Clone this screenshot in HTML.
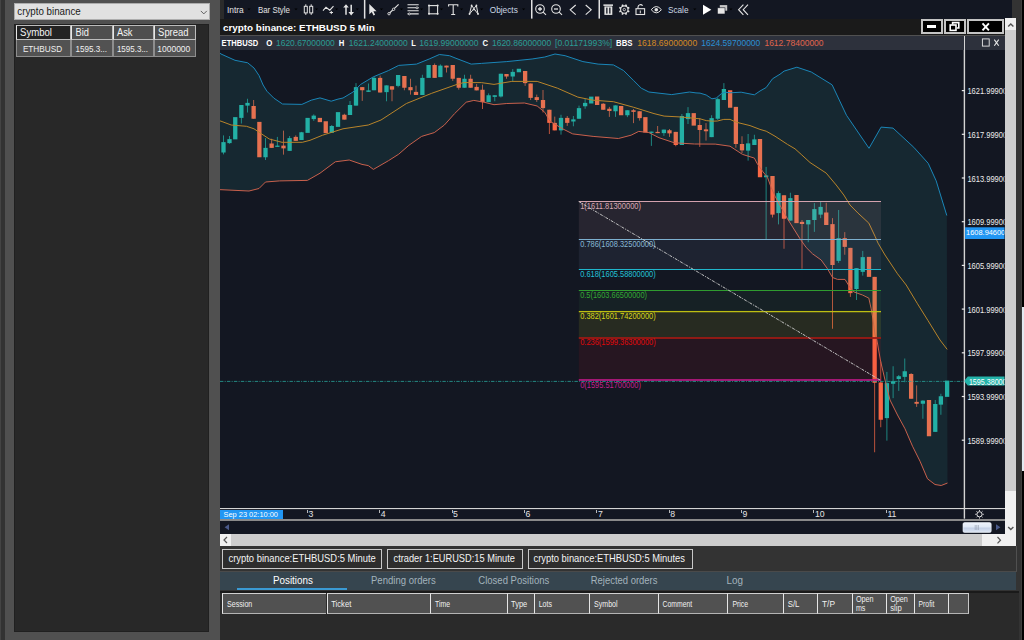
<!DOCTYPE html>
<html><head><meta charset="utf-8"><title>ETHBUSD chart</title>
<style>
*{box-sizing:border-box;margin:0;padding:0}
html,body{width:1024px;height:640px;overflow:hidden;background:#333;font-family:"Liberation Sans",sans-serif;}
.a{position:absolute}
#left{left:0;top:0;width:220px;height:640px;background:#505050}
#lstrip{left:0;top:0;width:4.7px;height:640px;background:#333;border-left:1.2px solid #444}
#combo{left:14px;top:3px;width:196px;height:17px;background:#e1e1e1;border:1px solid #adadad}
#ltab{left:14.2px;top:24px;width:195.3px;height:608px;background:#282828;border:1.6px solid #202020}
.lh{top:25px;height:15px;background:#4f4f4f;border:1px solid #bdbdbd;border-left:1.5px solid #e6e6e6}
.lc{top:39px;height:18px;background:#525252;border:1px solid #8e8e8e}
#tb{left:220px;top:0;width:793px;height:19px;background:#131722}
#tbl{left:220px;top:0;width:4px;height:19px;background:#2b2b2b}
#rstrip{left:1012.4px;top:0;width:11.6px;height:640px;background:#333}
#rstrip2{left:1022.2px;top:0;width:1.8px;height:640px;background:#000}
#rstrip3{left:1021px;top:0;width:1.2px;height:640px;background:#3d3d3d}
#rpanel{left:1022.2px;top:307px;width:1.8px;height:163.5px;background:#e2e9f0}
#title{left:219.5px;top:18.6px;width:785.5px;height:17.4px;background:#1a1a1a;border-bottom:1px solid #505050}
#info{left:220px;top:36px;width:785px;height:14.3px;background:#2d313c;z-index:2}
#chart{left:220px;top:50px;width:785px;height:482px;background:#131722;overflow:hidden}
.wb{top:19px;height:15px;background:#000;border:2px solid #c4c4c4}
#vs{left:1004.5px;top:18px;width:11.8px;height:528px;background:#cdcdcd}
#hs{left:220px;top:534px;width:785px;height:12px;background:#cdcdcd}
#tabs{left:220px;top:546px;width:796.5px;height:25.8px;background:#333;border-right:1px solid #505050;border-bottom:1px solid #4a4a4a}
.tab{top:549px;height:20px;background:#2d2d2d;border:1px solid #c8c8c8}
#sec{left:219.8px;top:571.8px;width:796.7px;height:18.2px;background:#36454f}
#bot{left:219.8px;top:590px;width:799.2px;height:50px;background:#2a2a2a;border-top:1.3px solid #333}
#botl{left:219.8px;top:591.3px;width:799.2px;height:1.4px;background:#1a1a1a}
.th{top:593px;height:20.8px;background:#515151;border-top:1.2px solid #d0d0d0;border-bottom:1px solid #b4b4b4;border-left:1.6px solid #e6e6e6}
svg text{font-family:"Liberation Sans",sans-serif}
</style></head><body>
<div id="left" class="a"></div><div id="lstrip" class="a"></div>
<div id="combo" class="a"><svg class="a" style="left:185.4px;top:6px" width="8" height="6" viewBox="0 0 8 6"><path d="M0.8 0.9 L3.8 3.9 L6.8 0.9" fill="none" stroke="#606060" stroke-width="1"/></svg></div>
<div id="ltab" class="a"></div>
<div class="a lc" style="left:15.5px;width:55.5px;"></div>
<div class="a lh" style="left:15.5px;width:55.5px;background:#232323;"></div>
<div class="a lc" style="left:71px;width:41.5px;"></div>
<div class="a lh" style="left:71px;width:41.5px;"></div>
<div class="a lc" style="left:112.5px;width:41.5px;"></div>
<div class="a lh" style="left:112.5px;width:41.5px;"></div>
<div class="a lc" style="left:154px;width:42px;"></div>
<div class="a lh" style="left:154px;width:42px;"></div>
<div id="tb" class="a"></div><div id="tbl" class="a"></div>
<svg class="a" style="left:0;top:0" width="1024" height="19" viewBox="0 0 1024 19" fill="none" stroke-linecap="butt">
<path d="M247.4 8.5 h3.2 l-1.6 1.8z" fill="#000"/>
<path d="M294.4 8.5 h3.2 l-1.6 1.8z" fill="#000"/>
<path d="M314.9 8.5 h3.2 l-1.6 1.8z" fill="#000"/>
<path d="M335.0 8.5 h3.2 l-1.6 1.8z" fill="#000"/>
<path d="M355.7 8.5 h3.2 l-1.6 1.8z" fill="#000"/>
<path d="M379.9 8.5 h3.2 l-1.6 1.8z" fill="#000"/>
<path d="M399.9 8.5 h3.2 l-1.6 1.8z" fill="#000"/>
<path d="M420.0 8.5 h3.2 l-1.6 1.8z" fill="#000"/>
<path d="M439.9 8.5 h3.2 l-1.6 1.8z" fill="#000"/>
<path d="M460.0 8.5 h3.2 l-1.6 1.8z" fill="#000"/>
<path d="M480.1 8.5 h3.2 l-1.6 1.8z" fill="#000"/>
<path d="M522.0 8.5 h3.2 l-1.6 1.8z" fill="#000"/>
<path d="M693.2 8.5 h3.2 l-1.6 1.8z" fill="#000"/>
<path d="M729.3 8.5 h3.2 l-1.6 1.8z" fill="#000"/>
<rect x="363.9" y="0" width="1.5" height="18.6" fill="#e2e2e2"/>
<rect x="531.0" y="0" width="1.5" height="18.6" fill="#e2e2e2"/>
<rect x="598.5" y="0" width="1.5" height="18.6" fill="#e2e2e2"/>
<g stroke="#e4e4e4" stroke-width="1"><rect x="304.3" y="6.3" width="3" height="6.6"/><path d="M305.8 4.3v2M305.8 12.9v2"/><rect x="309.7" y="6.3" width="3" height="6.6"/><path d="M311.2 4.3v2M311.2 12.9v2"/></g>
<path d="M323 10.6 L326 7.2 L329.8 10.2 L333.5 6.2" stroke="#e4e4e4" stroke-width="1.1"/><path d="M329.6 12.5h3.4M331.3 10.9v3.2" stroke="#e4e4e4" stroke-width="1"/>
<g stroke="#e4e4e4" stroke-width="1.5"><path d="M346 14.8V6M351.2 4.8v8.8"/></g><path d="M346 4.2l-2.8 3.4h5.6zM351.2 15.4l-2.8-3.4h5.6z" fill="#e4e4e4"/>
<path d="M369.3 4v10.2l2.5-2.3 1.7 3.6 1.6-0.8-1.7-3.5h3.2z" fill="#e4e4e4"/>
<path d="M389.6 13 L398.6 4.3" stroke="#e4e4e4" stroke-width="1.1"/><circle cx="389" cy="13.7" r="1.2" stroke="#e4e4e4" stroke-width="0.9" fill="#131722"/><circle cx="393.6" cy="9.3" r="1.2" stroke="#e4e4e4" stroke-width="0.9" fill="#131722"/>
<g stroke="#e4e4e4" stroke-width="1.1"><path d="M407.5 4.8h11.2M407.5 7.8h11.2M407.5 10.8h11.2M407.5 13.9h11.2"/><circle cx="417" cy="7.8" r="1" fill="#131722" stroke-width="0.8"/><circle cx="409.3" cy="13.9" r="1" fill="#131722" stroke-width="0.8"/></g>
<rect x="429" y="5.6" width="8.6" height="8.2" stroke="#e4e4e4" stroke-width="1.1"/><circle cx="429" cy="5.6" r="1" fill="#e4e4e4"/><circle cx="429" cy="13.8" r="1" fill="#e4e4e4"/><circle cx="437.6" cy="5.6" r="1" fill="#e4e4e4"/><circle cx="437.6" cy="13.8" r="1" fill="#e4e4e4"/>
<path d="M448.6 6.4V4.8h9.2v1.6M453.2 4.8v9.6M451.2 14.5h4" stroke="#e4e4e4" stroke-width="1.1"/>
<path d="M469.5 14 L471.6 5.5 L478 14 L476.4 5.5 Z" stroke="#e4e4e4" stroke-width="1"/><circle cx="469.5" cy="14" r="0.9" fill="#e4e4e4"/><circle cx="471.6" cy="5.5" r="0.9" fill="#e4e4e4"/><circle cx="478" cy="14" r="0.9" fill="#e4e4e4"/><circle cx="476.4" cy="5.5" r="0.9" fill="#e4e4e4"/><circle cx="474" cy="9.6" r="0.9" fill="#e4e4e4"/>
<g stroke="#e4e4e4" stroke-width="1.1"><circle cx="540" cy="9" r="4.3"/><path d="M543.2 12.2L546 14.9"/><path d="M538 9h4M540 7v4" stroke-width="1.3"/><circle cx="556" cy="9" r="4.3"/><path d="M559.2 12.2L562 14.9"/><path d="M554 9h4" stroke-width="1.3"/></g>
<path d="M575.7 5 L570.2 9.8 L575.7 14.7M585.7 5 L591.2 9.8 L585.7 14.7" stroke="#e4e4e4" stroke-width="1.1"/>
<rect x="603.4" y="4.4" width="9.6" height="1.5" fill="#e4e4e4"/><rect x="604.4" y="6.4" width="7.9" height="8.5" fill="#e4e4e4"/><rect x="606.2" y="7.6" width="1.3" height="6" fill="#131722"/><rect x="609.2" y="7.6" width="1.3" height="6" fill="#131722"/>
<circle cx="624.3" cy="9.6" r="3.7" stroke="#e4e4e4" stroke-width="1.1"/><path d="M627.72 11.02L629.29 11.67M625.72 13.02L626.37 14.59M622.88 13.02L622.23 14.59M620.88 11.02L619.31 11.67M620.88 8.18L619.31 7.53M622.88 6.18L622.23 4.61M625.72 6.18L626.37 4.61M627.72 8.18L629.29 7.53" stroke="#e4e4e4" stroke-width="1.7"/><circle cx="624.3" cy="9.6" r="1.2" stroke="#e4e4e4" stroke-width="0.8"/>
<rect x="636" y="8.7" width="8.6" height="5.8" stroke="#e4e4e4" stroke-width="1.1"/><path d="M638 8.6V7a2.5 2.5 0 0 1 4.6-1.2" stroke="#e4e4e4" stroke-width="1.1"/><rect x="639.8" y="10.5" width="1" height="2.8" fill="#e4e4e4"/>
<path d="M651.2 9.7 Q656.3 3.4 661.4 9.7 Q656.3 16 651.2 9.7Z" stroke="#e4e4e4" stroke-width="1"/><circle cx="656.3" cy="9.7" r="1.8" fill="#e4e4e4"/>
<path d="M703 4.7V14.8L711.3 9.7Z" fill="#fff"/>
<rect x="719.8" y="5.1" width="7.4" height="5.6" fill="#c8c8c8"/><rect x="717.4" y="7.8" width="7.6" height="6.2" fill="#e6e6e6" stroke="#131722" stroke-width="0.6"/>
<path d="M743.4 4.6 L738.6 9.7 L743.4 14.8M748 4.6 L743.2 9.7 L748 14.8" stroke="#e4e4e4" stroke-width="1.1"/>
</svg>
<div id="rstrip" class="a"></div><div id="rstrip3" class="a"></div><div id="rstrip2" class="a"></div><div id="rpanel" class="a"></div>
<div id="title" class="a"></div>
<div class="a wb" style="left:920.5px;width:22px"><div class="a" style="left:4.2px;top:4.2px;width:9.6px;height:3.2px;background:#fff"></div></div>
<div class="a wb" style="left:944px;width:21.5px"><svg class="a" style="left:0;top:0" width="18" height="12" viewBox="0 0 18 12" fill="none" stroke="#fff" stroke-width="1.6"><path d="M6.6 3.4V1.6h6.2v5.4h-2"/><rect x="4.2" y="4" width="5.8" height="5.4" fill="#000"/></svg></div>
<div class="a wb" style="left:967px;width:37px"><svg class="a" style="left:0;top:0" width="33" height="12" viewBox="0 0 33 12" fill="none" stroke="#fff" stroke-width="1.9"><path d="M13.5 2.3l6.4 7M19.9 2.3l-6.4 7"/></svg></div>
<div id="info" class="a"></div><div class="a" style="left:963.7px;top:35.5px;width:1.4px;height:16px;background:#d4d4d4;z-index:3"></div>
<svg class="a" style="left:980px;top:37px;z-index:4" width="24" height="12" viewBox="0 0 24 12" fill="none" stroke="#e8e8e8"><rect x="2.4" y="1.9" width="6.8" height="7.2" stroke-width="0.9"/><path d="M14.3 2.6l4.4 6.2M18.7 2.6l-4.4 6.2" stroke-width="1.1"/></svg>
<div id="chart" class="a"><svg class="a" style="left:0;top:0" width="785" height="482" viewBox="0 0 785 482" font-family="Liberation Sans, sans-serif">
<rect x="3.00" y="85.38" width="1" height="19.00" fill="#22aea3" opacity="0.72"/>
<rect x="1.35" y="92.12" width="4.3" height="10.38" fill="#22aea3"/>
<rect x="9.00" y="86.00" width="1" height="7.75" fill="#22aea3" opacity="0.72"/>
<rect x="7.35" y="89.12" width="4.3" height="4.00" fill="#22aea3"/>
<rect x="13.10" y="67.12" width="4.3" height="22.25" fill="#22aea3"/>
<rect x="20.88" y="55.00" width="1" height="18.50" fill="#22aea3" opacity="0.72"/>
<rect x="19.23" y="55.00" width="4.3" height="12.88" fill="#22aea3"/>
<rect x="27.00" y="48.75" width="1" height="13.75" fill="#22aea3" opacity="0.72"/>
<rect x="25.35" y="52.88" width="4.3" height="2.75" fill="#22aea3"/>
<rect x="33.12" y="50.00" width="1" height="18.75" fill="#fb6845" opacity="0.72"/>
<rect x="31.48" y="56.00" width="4.3" height="12.75" fill="#fb6845"/>
<rect x="37.23" y="71.88" width="4.3" height="35.38" fill="#fb6845"/>
<rect x="45.00" y="88.12" width="1" height="21.88" fill="#22aea3" opacity="0.72"/>
<rect x="43.35" y="97.88" width="4.3" height="9.38" fill="#22aea3"/>
<rect x="51.12" y="88.75" width="1" height="9.12" fill="#fb6845" opacity="0.72"/>
<rect x="49.48" y="93.50" width="4.3" height="4.38" fill="#fb6845"/>
<rect x="56.88" y="86.88" width="1" height="10.00" fill="#22aea3" opacity="0.72"/>
<rect x="55.23" y="95.62" width="4.3" height="1.25" fill="#22aea3"/>
<rect x="63.00" y="80.62" width="1" height="24.00" fill="#fb6845" opacity="0.72"/>
<rect x="61.35" y="95.62" width="4.3" height="2.75" fill="#fb6845"/>
<rect x="69.12" y="86.00" width="1" height="14.88" fill="#22aea3" opacity="0.72"/>
<rect x="67.47" y="88.12" width="4.3" height="12.75" fill="#22aea3"/>
<rect x="75.25" y="85.38" width="1" height="5.50" fill="#fb6845" opacity="0.72"/>
<rect x="73.60" y="86.88" width="4.3" height="4.00" fill="#fb6845"/>
<rect x="81.00" y="81.88" width="1" height="8.12" fill="#22aea3" opacity="0.72"/>
<rect x="79.35" y="82.25" width="4.3" height="7.75" fill="#22aea3"/>
<rect x="85.47" y="67.88" width="4.3" height="15.00" fill="#22aea3"/>
<rect x="93.25" y="64.38" width="1" height="6.50" fill="#22aea3" opacity="0.72"/>
<rect x="91.60" y="65.62" width="4.3" height="3.50" fill="#22aea3"/>
<rect x="97.72" y="67.88" width="4.3" height="4.25" fill="#fb6845"/>
<rect x="103.60" y="71.25" width="4.3" height="11.88" fill="#fb6845"/>
<rect x="111.25" y="75.00" width="1" height="7.88" fill="#22aea3" opacity="0.72"/>
<rect x="109.60" y="76.00" width="4.3" height="6.88" fill="#22aea3"/>
<rect x="115.85" y="62.12" width="4.3" height="14.75" fill="#22aea3"/>
<rect x="123.88" y="63.75" width="1" height="5.88" fill="#fb6845" opacity="0.72"/>
<rect x="122.22" y="64.75" width="4.3" height="4.88" fill="#fb6845"/>
<rect x="129.50" y="51.00" width="1" height="14.00" fill="#22aea3" opacity="0.72"/>
<rect x="127.85" y="55.00" width="4.3" height="10.00" fill="#22aea3"/>
<rect x="135.50" y="33.12" width="1" height="22.50" fill="#22aea3" opacity="0.72"/>
<rect x="133.85" y="37.12" width="4.3" height="18.50" fill="#22aea3"/>
<rect x="141.75" y="37.12" width="1" height="13.75" fill="#fb6845" opacity="0.72"/>
<rect x="140.10" y="37.12" width="4.3" height="3.12" fill="#fb6845"/>
<rect x="148.00" y="33.50" width="1" height="8.38" fill="#22aea3" opacity="0.72"/>
<rect x="146.35" y="40.38" width="4.3" height="1.50" fill="#22aea3"/>
<rect x="153.50" y="26.88" width="1" height="13.38" fill="#22aea3" opacity="0.72"/>
<rect x="151.85" y="27.88" width="4.3" height="12.38" fill="#22aea3"/>
<rect x="159.62" y="25.62" width="1" height="16.88" fill="#fb6845" opacity="0.72"/>
<rect x="157.97" y="27.88" width="4.3" height="14.62" fill="#fb6845"/>
<rect x="166.00" y="35.38" width="1" height="15.88" fill="#22aea3" opacity="0.72"/>
<rect x="164.35" y="35.38" width="4.3" height="6.75" fill="#22aea3"/>
<rect x="171.50" y="36.25" width="1" height="15.00" fill="#fb6845" opacity="0.72"/>
<rect x="169.85" y="36.25" width="4.3" height="3.38" fill="#fb6845"/>
<rect x="177.62" y="25.00" width="1" height="12.25" fill="#22aea3" opacity="0.72"/>
<rect x="175.97" y="25.00" width="4.3" height="10.88" fill="#22aea3"/>
<rect x="183.88" y="26.00" width="1" height="14.25" fill="#fb6845" opacity="0.72"/>
<rect x="182.22" y="26.00" width="4.3" height="11.75" fill="#fb6845"/>
<rect x="190.00" y="28.75" width="1" height="15.88" fill="#fb6845" opacity="0.72"/>
<rect x="188.35" y="37.12" width="4.3" height="3.12" fill="#fb6845"/>
<rect x="195.50" y="35.62" width="1" height="9.38" fill="#fb6845" opacity="0.72"/>
<rect x="193.85" y="41.88" width="4.3" height="3.12" fill="#fb6845"/>
<rect x="201.88" y="24.75" width="1" height="20.25" fill="#22aea3" opacity="0.72"/>
<rect x="200.22" y="27.88" width="4.3" height="17.12" fill="#22aea3"/>
<rect x="206.47" y="15.00" width="4.3" height="12.88" fill="#22aea3"/>
<rect x="214.12" y="13.50" width="1" height="14.38" fill="#fb6845" opacity="0.72"/>
<rect x="212.47" y="15.00" width="4.3" height="12.88" fill="#fb6845"/>
<rect x="219.88" y="14.38" width="1" height="12.75" fill="#22aea3" opacity="0.72"/>
<rect x="218.22" y="15.62" width="4.3" height="11.50" fill="#22aea3"/>
<rect x="226.00" y="15.62" width="1" height="6.88" fill="#fb6845" opacity="0.72"/>
<rect x="224.35" y="15.62" width="4.3" height="1.88" fill="#fb6845"/>
<rect x="232.25" y="15.00" width="1" height="15.88" fill="#fb6845" opacity="0.72"/>
<rect x="230.60" y="15.00" width="4.3" height="13.75" fill="#fb6845"/>
<rect x="238.25" y="27.88" width="1" height="11.75" fill="#fb6845" opacity="0.72"/>
<rect x="236.60" y="27.88" width="4.3" height="9.88" fill="#fb6845"/>
<rect x="244.00" y="24.75" width="1" height="13.00" fill="#22aea3" opacity="0.72"/>
<rect x="242.35" y="28.75" width="4.3" height="9.00" fill="#22aea3"/>
<rect x="250.12" y="24.75" width="1" height="13.00" fill="#fb6845" opacity="0.72"/>
<rect x="248.47" y="28.75" width="4.3" height="9.00" fill="#fb6845"/>
<rect x="256.12" y="34.00" width="1" height="6.38" fill="#fb6845" opacity="0.72"/>
<rect x="254.47" y="36.88" width="4.3" height="3.50" fill="#fb6845"/>
<rect x="262.00" y="34.62" width="1" height="24.38" fill="#fb6845" opacity="0.72"/>
<rect x="260.35" y="39.75" width="4.3" height="12.38" fill="#fb6845"/>
<rect x="268.12" y="43.38" width="1" height="8.75" fill="#22aea3" opacity="0.72"/>
<rect x="266.48" y="45.25" width="4.3" height="6.88" fill="#22aea3"/>
<rect x="274.25" y="45.25" width="1" height="6.00" fill="#22aea3" opacity="0.72"/>
<rect x="272.60" y="45.25" width="4.3" height="1.62" fill="#22aea3"/>
<rect x="280.38" y="23.75" width="1" height="23.75" fill="#22aea3" opacity="0.72"/>
<rect x="278.73" y="23.75" width="4.3" height="22.75" fill="#22aea3"/>
<rect x="286.00" y="24.00" width="1" height="4.75" fill="#fb6845" opacity="0.72"/>
<rect x="284.35" y="24.00" width="4.3" height="2.50" fill="#fb6845"/>
<rect x="292.25" y="19.12" width="1" height="11.88" fill="#22aea3" opacity="0.72"/>
<rect x="290.60" y="21.88" width="4.3" height="4.62" fill="#22aea3"/>
<rect x="296.73" y="18.75" width="4.3" height="3.50" fill="#22aea3"/>
<rect x="304.62" y="21.00" width="1" height="14.88" fill="#fb6845" opacity="0.72"/>
<rect x="302.98" y="21.00" width="4.3" height="12.12" fill="#fb6845"/>
<rect x="310.12" y="33.50" width="1" height="16.50" fill="#fb6845" opacity="0.72"/>
<rect x="308.48" y="33.50" width="4.3" height="14.38" fill="#fb6845"/>
<rect x="316.25" y="44.62" width="1" height="7.25" fill="#fb6845" opacity="0.72"/>
<rect x="314.60" y="47.12" width="4.3" height="2.88" fill="#fb6845"/>
<rect x="322.50" y="40.00" width="1" height="22.50" fill="#fb6845" opacity="0.72"/>
<rect x="320.85" y="50.00" width="4.3" height="8.12" fill="#fb6845"/>
<rect x="328.88" y="59.75" width="1" height="24.25" fill="#fb6845" opacity="0.72"/>
<rect x="327.23" y="59.75" width="4.3" height="13.12" fill="#fb6845"/>
<rect x="334.25" y="66.62" width="1" height="13.75" fill="#fb6845" opacity="0.72"/>
<rect x="332.60" y="72.88" width="4.3" height="7.50" fill="#fb6845"/>
<rect x="340.50" y="64.75" width="1" height="19.88" fill="#22aea3" opacity="0.72"/>
<rect x="338.85" y="67.88" width="4.3" height="12.50" fill="#22aea3"/>
<rect x="346.75" y="66.00" width="1" height="9.88" fill="#fb6845" opacity="0.72"/>
<rect x="345.10" y="67.88" width="4.3" height="5.00" fill="#fb6845"/>
<rect x="352.88" y="66.00" width="1" height="10.25" fill="#22aea3" opacity="0.72"/>
<rect x="351.23" y="69.38" width="4.3" height="2.12" fill="#22aea3"/>
<rect x="358.50" y="55.62" width="1" height="13.12" fill="#22aea3" opacity="0.72"/>
<rect x="356.85" y="58.12" width="4.3" height="10.62" fill="#22aea3"/>
<rect x="364.62" y="48.50" width="1" height="10.25" fill="#22aea3" opacity="0.72"/>
<rect x="362.98" y="52.88" width="4.3" height="3.38" fill="#22aea3"/>
<rect x="369.10" y="46.62" width="4.3" height="6.88" fill="#22aea3"/>
<rect x="374.98" y="46.50" width="4.3" height="8.50" fill="#fb6845"/>
<rect x="382.75" y="53.12" width="1" height="6.62" fill="#fb6845" opacity="0.72"/>
<rect x="381.10" y="53.75" width="4.3" height="6.00" fill="#fb6845"/>
<rect x="388.88" y="56.88" width="1" height="10.00" fill="#fb6845" opacity="0.72"/>
<rect x="387.23" y="58.75" width="4.3" height="2.25" fill="#fb6845"/>
<rect x="395.00" y="55.38" width="1" height="11.50" fill="#22aea3" opacity="0.72"/>
<rect x="393.35" y="55.38" width="4.3" height="5.88" fill="#22aea3"/>
<rect x="398.98" y="56.00" width="4.3" height="9.25" fill="#fb6845"/>
<rect x="406.88" y="60.25" width="1" height="6.88" fill="#22aea3" opacity="0.72"/>
<rect x="405.23" y="60.25" width="4.3" height="5.00" fill="#22aea3"/>
<rect x="413.00" y="59.00" width="1" height="14.12" fill="#fb6845" opacity="0.72"/>
<rect x="411.35" y="60.25" width="4.3" height="1.62" fill="#fb6845"/>
<rect x="419.12" y="61.25" width="1" height="9.38" fill="#fb6845" opacity="0.72"/>
<rect x="417.48" y="61.25" width="4.3" height="6.88" fill="#fb6845"/>
<rect x="423.23" y="67.12" width="4.3" height="15.38" fill="#fb6845"/>
<rect x="430.88" y="81.62" width="1" height="14.25" fill="#22aea3" opacity="0.72"/>
<rect x="429.23" y="81.62" width="4.3" height="1.25" fill="#22aea3"/>
<rect x="437.12" y="76.00" width="1" height="7.12" fill="#fb6845" opacity="0.72"/>
<rect x="435.48" y="81.88" width="4.3" height="1.25" fill="#fb6845"/>
<rect x="443.38" y="79.62" width="1" height="6.25" fill="#22aea3" opacity="0.72"/>
<rect x="441.73" y="79.62" width="4.3" height="3.50" fill="#22aea3"/>
<rect x="449.00" y="79.00" width="1" height="7.88" fill="#fb6845" opacity="0.72"/>
<rect x="447.35" y="80.25" width="4.3" height="3.12" fill="#fb6845"/>
<rect x="455.25" y="81.88" width="1" height="14.38" fill="#fb6845" opacity="0.72"/>
<rect x="453.60" y="81.88" width="4.3" height="13.12" fill="#fb6845"/>
<rect x="461.38" y="64.00" width="1" height="31.00" fill="#22aea3" opacity="0.72"/>
<rect x="459.73" y="66.00" width="4.3" height="29.00" fill="#22aea3"/>
<rect x="467.50" y="57.12" width="1" height="16.88" fill="#22aea3" opacity="0.72"/>
<rect x="465.85" y="63.12" width="4.3" height="6.00" fill="#22aea3"/>
<rect x="471.60" y="63.12" width="4.3" height="12.50" fill="#fb6845"/>
<rect x="479.25" y="68.12" width="1" height="28.75" fill="#fb6845" opacity="0.72"/>
<rect x="477.60" y="75.00" width="4.3" height="5.00" fill="#fb6845"/>
<rect x="485.50" y="73.12" width="1" height="17.50" fill="#fb6845" opacity="0.72"/>
<rect x="483.85" y="79.38" width="4.3" height="1.88" fill="#fb6845"/>
<rect x="491.12" y="65.25" width="1" height="21.88" fill="#22aea3" opacity="0.72"/>
<rect x="489.48" y="68.12" width="4.3" height="19.00" fill="#22aea3"/>
<rect x="497.25" y="47.88" width="1" height="22.12" fill="#22aea3" opacity="0.72"/>
<rect x="495.60" y="49.12" width="4.3" height="19.62" fill="#22aea3"/>
<rect x="503.38" y="33.12" width="1" height="16.88" fill="#22aea3" opacity="0.72"/>
<rect x="501.73" y="39.00" width="4.3" height="11.00" fill="#22aea3"/>
<rect x="507.98" y="40.25" width="4.3" height="17.50" fill="#fb6845"/>
<rect x="515.38" y="56.88" width="1" height="40.88" fill="#fb6845" opacity="0.72"/>
<rect x="513.73" y="56.88" width="4.3" height="37.12" fill="#fb6845"/>
<rect x="521.50" y="86.25" width="1" height="16.88" fill="#fb6845" opacity="0.72"/>
<rect x="519.85" y="94.00" width="4.3" height="6.38" fill="#fb6845"/>
<rect x="527.62" y="84.00" width="1" height="26.62" fill="#22aea3" opacity="0.72"/>
<rect x="525.98" y="93.38" width="4.3" height="7.25" fill="#22aea3"/>
<rect x="533.88" y="84.75" width="1" height="10.25" fill="#22aea3" opacity="0.72"/>
<rect x="532.23" y="89.38" width="4.3" height="5.62" fill="#22aea3"/>
<rect x="537.85" y="89.00" width="4.3" height="38.25" fill="#fb6845"/>
<rect x="545.62" y="116.88" width="1" height="73.12" fill="#22aea3" opacity="0.72"/>
<rect x="543.98" y="125.38" width="4.3" height="1.88" fill="#22aea3"/>
<rect x="552.00" y="126.00" width="1" height="41.50" fill="#fb6845" opacity="0.72"/>
<rect x="550.35" y="126.00" width="4.3" height="38.62" fill="#fb6845"/>
<rect x="558.00" y="141.25" width="1" height="33.12" fill="#22aea3" opacity="0.72"/>
<rect x="556.35" y="143.12" width="4.3" height="20.00" fill="#22aea3"/>
<rect x="563.50" y="145.25" width="1" height="53.50" fill="#fb6845" opacity="0.72"/>
<rect x="561.85" y="145.25" width="4.3" height="23.50" fill="#fb6845"/>
<rect x="569.88" y="142.75" width="1" height="27.88" fill="#22aea3" opacity="0.72"/>
<rect x="568.23" y="148.12" width="4.3" height="22.50" fill="#22aea3"/>
<rect x="574.35" y="145.00" width="4.3" height="28.12" fill="#fb6845"/>
<rect x="581.50" y="170.00" width="1" height="48.75" fill="#fb6845" opacity="0.72"/>
<rect x="579.85" y="171.88" width="4.3" height="2.12" fill="#fb6845"/>
<rect x="587.75" y="170.00" width="1" height="22.25" fill="#22aea3" opacity="0.72"/>
<rect x="586.10" y="170.00" width="4.3" height="4.38" fill="#22aea3"/>
<rect x="593.88" y="153.12" width="1" height="28.75" fill="#22aea3" opacity="0.72"/>
<rect x="592.23" y="159.12" width="4.3" height="10.88" fill="#22aea3"/>
<rect x="600.12" y="151.25" width="1" height="16.88" fill="#22aea3" opacity="0.72"/>
<rect x="598.48" y="156.88" width="4.3" height="7.75" fill="#22aea3"/>
<rect x="605.75" y="152.75" width="1" height="22.25" fill="#fb6845" opacity="0.72"/>
<rect x="604.10" y="162.50" width="4.3" height="12.50" fill="#fb6845"/>
<rect x="612.00" y="168.12" width="1" height="110.62" fill="#fb6845" opacity="0.72"/>
<rect x="610.35" y="174.12" width="4.3" height="40.88" fill="#fb6845"/>
<rect x="618.12" y="160.00" width="1" height="52.88" fill="#22aea3" opacity="0.72"/>
<rect x="616.48" y="188.12" width="4.3" height="22.75" fill="#22aea3"/>
<rect x="624.25" y="182.12" width="1" height="22.62" fill="#fb6845" opacity="0.72"/>
<rect x="622.60" y="188.12" width="4.3" height="8.75" fill="#fb6845"/>
<rect x="629.88" y="197.88" width="1" height="49.00" fill="#fb6845" opacity="0.72"/>
<rect x="628.23" y="197.88" width="4.3" height="45.25" fill="#fb6845"/>
<rect x="636.00" y="218.12" width="1" height="31.88" fill="#22aea3" opacity="0.72"/>
<rect x="634.35" y="218.12" width="4.3" height="20.88" fill="#22aea3"/>
<rect x="642.25" y="200.88" width="1" height="24.75" fill="#22aea3" opacity="0.72"/>
<rect x="640.60" y="207.12" width="4.3" height="14.75" fill="#22aea3"/>
<rect x="646.85" y="206.88" width="4.3" height="20.00" fill="#fb6845"/>
<rect x="654.12" y="226.88" width="1" height="175.38" fill="#fb6845" opacity="0.72"/>
<rect x="652.48" y="226.88" width="4.3" height="105.88" fill="#fb6845"/>
<rect x="660.25" y="311.25" width="1" height="66.00" fill="#fb6845" opacity="0.72"/>
<rect x="658.60" y="332.50" width="4.3" height="37.25" fill="#fb6845"/>
<rect x="666.38" y="321.88" width="1" height="68.75" fill="#22aea3" opacity="0.72"/>
<rect x="664.73" y="333.12" width="4.3" height="35.00" fill="#22aea3"/>
<rect x="672.62" y="316.25" width="1" height="31.88" fill="#22aea3" opacity="0.72"/>
<rect x="670.98" y="331.25" width="4.3" height="2.50" fill="#22aea3"/>
<rect x="678.25" y="325.00" width="1" height="15.88" fill="#22aea3" opacity="0.72"/>
<rect x="676.60" y="326.25" width="4.3" height="2.75" fill="#22aea3"/>
<rect x="684.25" y="308.50" width="1" height="23.75" fill="#22aea3" opacity="0.72"/>
<rect x="682.60" y="321.25" width="4.3" height="5.62" fill="#22aea3"/>
<rect x="690.62" y="323.12" width="1" height="25.62" fill="#fb6845" opacity="0.72"/>
<rect x="688.98" y="324.00" width="4.3" height="24.75" fill="#fb6845"/>
<rect x="696.12" y="335.38" width="1" height="21.50" fill="#fb6845" opacity="0.72"/>
<rect x="694.48" y="351.88" width="4.3" height="1.88" fill="#fb6845"/>
<rect x="702.38" y="350.25" width="1" height="18.50" fill="#22aea3" opacity="0.72"/>
<rect x="700.73" y="350.62" width="4.3" height="3.12" fill="#22aea3"/>
<rect x="706.85" y="350.00" width="4.3" height="36.25" fill="#fb6845"/>
<rect x="714.75" y="350.00" width="1" height="31.88" fill="#22aea3" opacity="0.72"/>
<rect x="713.10" y="354.00" width="4.3" height="27.88" fill="#22aea3"/>
<rect x="720.38" y="343.75" width="1" height="21.00" fill="#22aea3" opacity="0.72"/>
<rect x="718.73" y="346.25" width="4.3" height="8.38" fill="#22aea3"/>
<rect x="724.98" y="330.62" width="4.3" height="16.25" fill="#22aea3"/>
<polygon points="-0.5,2.8 1.0,4.0 15.0,10.3 27.7,12.8 34.0,18.0 39.0,25.5 43.1,35.0 46.9,41.2 53.8,48.1 62.5,54.0 81.9,54.4 91.2,50.2 100.0,47.9 111.2,51.2 118.0,49.1 123.0,48.0 133.0,42.0 140.7,34.4 153.4,26.8 168.6,20.5 178.7,15.4 196.5,14.1 209.2,9.0 219.4,4.5 229.5,5.7 236.0,8.3 251.2,14.1 261.4,13.4 286.8,11.6 312.1,9.0 324.8,7.0 335.0,4.0 345.1,5.7 362.9,11.6 378.1,14.1 393.4,14.9 403.5,20.5 413.7,30.6 421.3,38.2 428.9,42.0 451.7,44.6 469.5,42.0 476.0,42.9 480.0,43.1 486.2,45.0 491.9,48.8 496.2,48.1 501.2,43.8 505.0,42.2 510.0,42.8 521.2,42.2 534.4,44.8 540.0,41.0 546.2,37.5 552.5,28.8 560.0,24.2 564.1,21.1 576.9,17.2 591.3,22.0 612.1,34.8 626.5,65.3 649.0,98.3 661.1,77.1 673.0,78.1 693.8,97.3 708.2,113.3 716.2,130.9 726.8,165.5 727.5,433.0 721.2,435.5 715.0,434.5 707.5,428.8 700.0,411.2 692.5,396.2 685.0,378.8 677.5,365.0 670.0,350.0 666.2,335.0 660.6,311.2 656.9,290.0 655.0,285.0 653.1,270.0 651.2,258.8 648.8,248.1 642.5,245.0 633.8,241.9 630.0,237.5 625.0,229.4 617.5,229.4 612.5,227.5 607.5,218.8 601.2,210.0 592.5,203.8 586.2,197.5 580.0,188.8 567.5,168.8 561.2,157.5 555.0,146.2 551.2,137.5 547.5,127.5 542.5,121.2 536.9,113.1 534.4,108.1 522.5,104.4 510.0,96.2 495.2,94.1 474.6,94.0 454.3,92.8 439.0,87.7 428.9,82.6 418.7,81.4 411.1,85.2 398.4,88.5 373.1,86.4 352.7,83.9 342.6,78.8 329.9,71.2 324.8,62.3 317.2,56.0 304.5,53.0 286.8,53.5 274.0,54.7 263.9,52.2 253.8,50.4 246.2,52.2 234.6,63.6 224.4,75.0 214.3,82.6 201.6,86.4 188.9,95.3 178.7,104.2 168.6,110.6 153.4,119.4 148.3,115.6 142.0,114.4 129.2,110.0 115.3,111.8 100.0,123.2 87.4,130.4 59.5,130.9 45.5,132.0 39.0,138.5 29.0,141.0 1.0,139.7 -0.5,139.7" fill="rgba(46,200,190,0.1)"/>
<polyline points="-0.5,2.8 1.0,4.0 15.0,10.3 27.7,12.8 34.0,18.0 39.0,25.5 43.1,35.0 46.9,41.2 53.8,48.1 62.5,54.0 81.9,54.4 91.2,50.2 100.0,47.9 111.2,51.2 118.0,49.1 123.0,48.0 133.0,42.0 140.7,34.4 153.4,26.8 168.6,20.5 178.7,15.4 196.5,14.1 209.2,9.0 219.4,4.5 229.5,5.7 236.0,8.3 251.2,14.1 261.4,13.4 286.8,11.6 312.1,9.0 324.8,7.0 335.0,4.0 345.1,5.7 362.9,11.6 378.1,14.1 393.4,14.9 403.5,20.5 413.7,30.6 421.3,38.2 428.9,42.0 451.7,44.6 469.5,42.0 476.0,42.9 480.0,43.1 486.2,45.0 491.9,48.8 496.2,48.1 501.2,43.8 505.0,42.2 510.0,42.8 521.2,42.2 534.4,44.8 540.0,41.0 546.2,37.5 552.5,28.8 560.0,24.2 564.1,21.1 576.9,17.2 591.3,22.0 612.1,34.8 626.5,65.3 649.0,98.3 661.1,77.1 673.0,78.1 693.8,97.3 708.2,113.3 716.2,130.9 726.8,165.5" fill="none" stroke="#1a86b8" stroke-width="1"/>
<polyline points="-0.5,70.8 1.0,71.2 11.2,75.0 26.5,76.3 34.0,78.8 41.7,84.0 49.3,89.0 62.0,92.3 82.3,92.3 90.0,90.3 102.6,85.2 123.0,78.8 148.3,75.0 161.0,70.0 186.4,53.5 211.7,43.3 237.0,34.4 243.6,32.6 261.4,32.6 274.0,34.4 291.8,31.4 317.2,31.4 337.5,38.2 357.8,47.1 373.1,50.2 393.4,51.7 413.7,57.3 434.0,63.6 444.1,66.1 459.4,66.9 480.0,68.8 486.2,70.6 492.5,71.2 497.5,71.0 503.8,69.4 510.0,69.4 516.2,72.2 530.0,75.6 540.0,79.4 546.2,81.2 555.0,86.2 567.5,94.4 575.0,98.8 581.2,104.4 590.0,112.5 606.2,123.1 616.2,135.0 623.8,145.0 630.0,155.0 638.0,163.1 648.8,173.1 655.0,186.2 658.0,193.1 665.0,205.0 677.5,223.8 686.2,235.0 697.5,253.8 708.0,270.6 713.8,280.0 720.0,290.0 727.2,299.4" fill="none" stroke="#b8842a" stroke-width="1"/>
<polyline points="-0.5,139.7 1.0,139.7 29.0,141.0 39.0,138.5 45.5,132.0 59.5,130.9 87.4,130.4 100.0,123.2 115.3,111.8 129.2,110.0 142.0,114.4 148.3,115.6 153.4,119.4 168.6,110.6 178.7,104.2 188.9,95.3 201.6,86.4 214.3,82.6 224.4,75.0 234.6,63.6 246.2,52.2 253.8,50.4 263.9,52.2 274.0,54.7 286.8,53.5 304.5,53.0 317.2,56.0 324.8,62.3 329.9,71.2 342.6,78.8 352.7,83.9 373.1,86.4 398.4,88.5 411.1,85.2 418.7,81.4 428.9,82.6 439.0,87.7 454.3,92.8 474.6,94.0 495.2,94.1 510.0,96.2 522.5,104.4 534.4,108.1 536.9,113.1 542.5,121.2 547.5,127.5 551.2,137.5 555.0,146.2 561.2,157.5 567.5,168.8 580.0,188.8 586.2,197.5 592.5,203.8 601.2,210.0 607.5,218.8 612.5,227.5 617.5,229.4 625.0,229.4 630.0,237.5 633.8,241.9 642.5,245.0 648.8,248.1 651.2,258.8 653.1,270.0 655.0,285.0 656.9,290.0 660.6,311.2 666.2,335.0 670.0,350.0 677.5,365.0 685.0,378.8 692.5,396.2 700.0,411.2 707.5,428.8 715.0,434.5 721.2,435.5 727.5,433.0" fill="none" stroke="#c9604c" stroke-width="1"/>
<rect x="358.8" y="151.5" width="302.2" height="38.0" fill="rgba(216,160,170,0.105)"/>
<rect x="358.8" y="189.5" width="302.2" height="30.0" fill="rgba(125,150,190,0.10)"/>
<rect x="358.8" y="219.5" width="302.2" height="21.0" fill="rgba(0,188,212,0.0)"/>
<rect x="358.8" y="240.5" width="302.2" height="21.1" fill="rgba(76,175,80,0.07)"/>
<rect x="358.8" y="261.6" width="302.2" height="26.4" fill="rgba(215,215,30,0.105)"/>
<rect x="358.8" y="288.0" width="302.2" height="42.0" fill="rgba(220,20,30,0.095)"/>
<rect x="358.8" y="151.00" width="302.2" height="1.0" fill="#d4a2ae"/>
<text x="360.2" y="158.5" font-size="8.2" fill="#d8aab4" textLength="60.8" lengthAdjust="spacingAndGlyphs">1(1611.81300000)</text>
<rect x="358.8" y="189.00" width="302.2" height="1.0" fill="#7db0cf"/>
<text x="360.2" y="196.5" font-size="8.2" fill="#86b8d6" textLength="75.4" lengthAdjust="spacingAndGlyphs">0.786(1608.32500000)</text>
<rect x="358.8" y="219.00" width="302.2" height="1.0" fill="#20b6cb"/>
<text x="360.2" y="226.5" font-size="8.2" fill="#22c2d8" textLength="75.5" lengthAdjust="spacingAndGlyphs">0.618(1605.58800000)</text>
<rect x="358.8" y="240.00" width="302.2" height="1.0" fill="#2f9c2f"/>
<text x="360.2" y="247.5" font-size="8.2" fill="#34a834" textLength="66.8" lengthAdjust="spacingAndGlyphs">0.5(1603.66500000)</text>
<rect x="358.8" y="260.95" width="302.2" height="1.3" fill="#bebe12"/>
<text x="360.2" y="268.5" font-size="8.2" fill="#d6d618" textLength="75.5" lengthAdjust="spacingAndGlyphs">0.382(1601.74200000)</text>
<rect x="358.8" y="287.10" width="302.2" height="1.8" fill="#9c1a14"/>
<text x="360.2" y="294.5" font-size="8.2" fill="#e00808" textLength="75.5" lengthAdjust="spacingAndGlyphs">0.236(1599.36300000)</text>
<rect x="358.8" y="329.10" width="302.2" height="1.8" fill="#b4187e"/>
<text x="360.2" y="337.5" font-size="8.2" fill="#c4208e" textLength="60.8" lengthAdjust="spacingAndGlyphs">0(1595.51700000)</text>
<line x1="358.8" y1="151.5" x2="660.0" y2="330" stroke="#c8c8c8" stroke-width="0.95" stroke-dasharray="3 1.1 1 1.1"/>
<line x1="0" y1="331.4" x2="744.4" y2="331.4" stroke="#28a49a" stroke-width="0.8" stroke-dasharray="3.4 1.3 1 1.25"/>
<rect x="743.7" y="-16" width="1.4" height="484.70000000000005" fill="#d4d4d4"/>
<rect x="0" y="458" width="785" height="1.1" fill="#d4d4d4"/>
<rect x="741.8" y="40.0" width="3" height="1.2" fill="#e8e8e8"/>
<rect x="741.8" y="83.7" width="3" height="1.2" fill="#e8e8e8"/>
<rect x="741.8" y="127.4" width="3" height="1.2" fill="#e8e8e8"/>
<rect x="741.8" y="171.1" width="3" height="1.2" fill="#e8e8e8"/>
<rect x="741.8" y="214.8" width="3" height="1.2" fill="#e8e8e8"/>
<rect x="741.8" y="258.5" width="3" height="1.2" fill="#e8e8e8"/>
<rect x="741.8" y="302.2" width="3" height="1.2" fill="#e8e8e8"/>
<rect x="741.8" y="345.9" width="3" height="1.2" fill="#e8e8e8"/>
<rect x="741.8" y="389.6" width="3" height="1.2" fill="#e8e8e8"/>
<clipPath id="pc"><rect x="744.4" y="0" width="40.1" height="470"/></clipPath><g clip-path="url(#pc)">
<text x="747.4" y="44.1" font-size="8.4" fill="#ececec" textLength="52.3" lengthAdjust="spacingAndGlyphs">1621.99900000</text>
<text x="747.4" y="87.8" font-size="8.4" fill="#ececec" textLength="52.3" lengthAdjust="spacingAndGlyphs">1617.99900000</text>
<text x="747.4" y="131.5" font-size="8.4" fill="#ececec" textLength="52.3" lengthAdjust="spacingAndGlyphs">1613.99900000</text>
<text x="747.4" y="175.2" font-size="8.4" fill="#ececec" textLength="52.3" lengthAdjust="spacingAndGlyphs">1609.99900000</text>
<text x="747.4" y="218.9" font-size="8.4" fill="#ececec" textLength="52.3" lengthAdjust="spacingAndGlyphs">1605.99900000</text>
<text x="747.4" y="262.6" font-size="8.4" fill="#ececec" textLength="52.3" lengthAdjust="spacingAndGlyphs">1601.99900000</text>
<text x="747.4" y="306.3" font-size="8.4" fill="#ececec" textLength="52.3" lengthAdjust="spacingAndGlyphs">1597.99900000</text>
<text x="747.4" y="350.0" font-size="8.4" fill="#ececec" textLength="52.3" lengthAdjust="spacingAndGlyphs">1593.99900000</text>
<text x="747.4" y="393.7" font-size="8.4" fill="#ececec" textLength="52.3" lengthAdjust="spacingAndGlyphs">1589.99900000</text>
<rect x="745.1" y="177.3" width="45" height="11.7" fill="#2196f3"/>
<text x="746.1" y="184.8" font-size="8" fill="#fff" textLength="51.5" lengthAdjust="spacingAndGlyphs">1608.94600000</text>
<path d="M744 331.0 L747.8 326.5 H800 V335.6 H747.8 Z" fill="#24b3a9"/>
<text x="748.9" y="334.6" font-size="8.2" fill="#fff" textLength="49.5" lengthAdjust="spacingAndGlyphs">1595.38000000</text>
</g>
</svg></div>
<div class="a" style="left:220px;top:509.5px;width:63px;height:9px;background:#2196f3"></div>
<div class="a" style="left:306.8px;top:510px;width:1px;height:2.6px;background:#b8b8b8"></div>
<div class="a" style="left:379.2px;top:510px;width:1px;height:2.6px;background:#b8b8b8"></div>
<div class="a" style="left:451.5px;top:510px;width:1px;height:2.6px;background:#b8b8b8"></div>
<div class="a" style="left:523.9px;top:510px;width:1px;height:2.6px;background:#b8b8b8"></div>
<div class="a" style="left:596.3px;top:510px;width:1px;height:2.6px;background:#b8b8b8"></div>
<div class="a" style="left:668.7px;top:510px;width:1px;height:2.6px;background:#b8b8b8"></div>
<div class="a" style="left:741.0px;top:510px;width:1px;height:2.6px;background:#b8b8b8"></div>
<div class="a" style="left:813.4px;top:510px;width:1px;height:2.6px;background:#b8b8b8"></div>
<div class="a" style="left:885.8px;top:510px;width:1px;height:2.6px;background:#b8b8b8"></div>
<div class="a" style="left:220px;top:518.7px;width:785px;height:2px;background:#8a8a8a"></div>
<div class="a" style="left:220px;top:520.7px;width:785px;height:13px;background:#131722"></div>
<svg class="a" style="left:220px;top:520px;width:785px;height:14px" viewBox="0 0 785 14"><defs><linearGradient id="g" x1="0" y1="0" x2="0" y2="1"><stop offset="0" stop-color="#eef3fb"/><stop offset="0.45" stop-color="#dfe8f5"/><stop offset="0.55" stop-color="#c3d0e6"/><stop offset="1" stop-color="#dde6f4"/></linearGradient></defs><path d="M9 4.2v6l-4.4-3z" fill="#4a5a8a"/><path d="M776 4.2v6l4.4-3z" fill="#4a5a8a"/><rect x="743" y="2.6" width="28.2" height="9.8" rx="1.5" fill="url(#g)" stroke="#f4f8ff" stroke-width="0.6"/><path d="M755.2 5v5M756.8 5v5M758.4 5v5" stroke="#9aa4b4" stroke-width="0.7"/></svg>
<svg class="a" style="left:974px;top:508.5px" width="11" height="11" viewBox="0 0 11 11" fill="none" stroke="#e8e8e8"><circle cx="5.5" cy="5.3" r="2.6" stroke-width="1"/><path d="M5.5 1v1.2M5.5 8.4v1.2M1.2 5.3h1.2M8.6 5.3h1.2M2.5 2.3l.8.8M7.7 7.5l.8.8M8.5 2.3l-.8.8M3.3 7.5l-.8.8" stroke-width="0.9"/></svg>
<div id="hs" class="a"></div>
<div class="a" style="left:220px;top:533.5px;width:11px;height:12.5px;background:#f0f0f0"></div>
<div class="a" style="left:982px;top:533.5px;width:23px;height:12.5px;background:#f0f0f0"></div>
<div id="vs" class="a"></div>
<div class="a" style="left:1004.5px;top:18px;width:11.8px;height:12px;background:#f0f0f0"></div>
<div class="a" style="left:1004.5px;top:490.5px;width:11.8px;height:55.5px;background:#f0f0f0"></div>
<svg class="a" style="left:0;top:0" width="1024" height="640" viewBox="0 0 1024 640" fill="none" stroke="#555" stroke-width="1.2"><path d="M227 537l-3 3 3 3"/><path d="M997.5 537l3 3.2-3 3.2"/><path d="M1008.2 26.6l2.6-2.7 2.6 2.7" stroke-width="1.4"/><path d="M1008.2 526.9l2.6 2.7 2.6-2.7" stroke-width="1.4"/></svg>
<div id="tabs" class="a"></div>
<div class="a tab" style="left:222px;width:160px"></div>
<div class="a tab" style="left:387px;width:136.3px"></div>
<div class="a tab" style="left:527.6px;width:165.2px"></div>
<div id="sec" class="a"><div class="a" style="left:17.5px;top:16px;width:110.1px;height:2.2px;background:#3a9ad4"></div></div>
<div id="bot" class="a"></div><div id="botl" class="a"></div>
<div class="a th" style="left:221.9px;width:104.6px"></div>
<div class="a th" style="left:326.5px;width:103.7px"></div>
<div class="a th" style="left:430.2px;width:76.9px"></div>
<div class="a th" style="left:507.1px;width:26.9px"></div>
<div class="a th" style="left:534px;width:55.2px"></div>
<div class="a th" style="left:589.2px;width:69.1px"></div>
<div class="a th" style="left:658.3px;width:69.0px"></div>
<div class="a th" style="left:727.3px;width:55.6px"></div>
<div class="a th" style="left:782.9px;width:34.3px"></div>
<div class="a th" style="left:817.2px;width:34.4px"></div>
<div class="a th" style="left:851.6px;width:34.7px"></div>
<div class="a th" style="left:886.3px;width:27.6px"></div>
<div class="a th" style="left:913.9px;width:34.3px"></div>
<div class="a th" style="left:948.2px;width:21.1px;border-right:1.2px solid #c8c8c8"></div>
<svg class="a" style="left:0;top:0;pointer-events:none;z-index:9" width="1024" height="640" viewBox="0 0 1024 640"><text x="17.3" y="14.8" font-size="10.5" fill="#1a1a1a" textLength="63.4" lengthAdjust="spacingAndGlyphs">crypto binance</text>
<text x="20.0" y="35.6" font-size="10" fill="#f4f4f4" textLength="32.0" lengthAdjust="spacingAndGlyphs">Symbol</text>
<text x="75.6" y="35.6" font-size="10" fill="#f4f4f4" textLength="13.4" lengthAdjust="spacingAndGlyphs">Bid</text>
<text x="116.9" y="35.6" font-size="10" fill="#f4f4f4" textLength="15.6" lengthAdjust="spacingAndGlyphs">Ask</text>
<text x="158.1" y="35.6" font-size="10" fill="#f4f4f4" textLength="30.4" lengthAdjust="spacingAndGlyphs">Spread</text>
<text x="22.9" y="52.2" font-size="8.7" fill="#f0f0f0" textLength="39.2" lengthAdjust="spacingAndGlyphs">ETHBUSD</text>
<text x="75.4" y="52.2" font-size="8.7" fill="#f0f0f0" textLength="31.5" lengthAdjust="spacingAndGlyphs">1595.3...</text>
<text x="116.9" y="52.2" font-size="8.7" fill="#f0f0f0" textLength="31.2" lengthAdjust="spacingAndGlyphs">1595.3...</text>
<text x="157.3" y="52.2" font-size="8.7" fill="#f0f0f0" textLength="33.0" lengthAdjust="spacingAndGlyphs">1000000</text>
<text x="226.9" y="13.1" font-size="8.8" fill="#e2e2e2" textLength="16.8" lengthAdjust="spacingAndGlyphs">Intra</text>
<text x="257.9" y="13.1" font-size="8.8" fill="#e2e2e2" textLength="32.1" lengthAdjust="spacingAndGlyphs">Bar Style</text>
<text x="489.7" y="13.0" font-size="8.7" fill="#ccd8e4" textLength="28.1" lengthAdjust="spacingAndGlyphs">Objects</text>
<text x="667.9" y="13.0" font-size="8.7" fill="#ccd8e4" textLength="20.6" lengthAdjust="spacingAndGlyphs">Scale</text>
<text x="223.0" y="31.4" font-size="9.7" fill="#fff" font-weight="bold" textLength="151.7" lengthAdjust="spacingAndGlyphs">crypto binance: ETHBUSD 5 Min</text>
<text x="221.6" y="45.6" font-size="8.9" fill="#fff" font-weight="bold" textLength="36.6" lengthAdjust="spacingAndGlyphs">ETHBUSD</text>
<text x="266.3" y="45.6" font-size="8.9" fill="#fff" font-weight="bold" textLength="6.1" lengthAdjust="spacingAndGlyphs">O</text>
<text x="276.0" y="45.6" font-size="9.4" fill="#2a9d94" textLength="58.8" lengthAdjust="spacingAndGlyphs">1620.67000000</text>
<text x="338.8" y="45.6" font-size="8.9" fill="#fff" font-weight="bold" textLength="5.6" lengthAdjust="spacingAndGlyphs">H</text>
<text x="348.8" y="45.6" font-size="9.4" fill="#2a9d94" textLength="58.8" lengthAdjust="spacingAndGlyphs">1621.24000000</text>
<text x="411.3" y="45.6" font-size="8.9" fill="#fff" font-weight="bold" textLength="4.6" lengthAdjust="spacingAndGlyphs">L</text>
<text x="419.2" y="45.6" font-size="9.4" fill="#2a9d94" textLength="59.3" lengthAdjust="spacingAndGlyphs">1619.99000000</text>
<text x="482.5" y="45.6" font-size="8.9" fill="#fff" font-weight="bold" textLength="5.6" lengthAdjust="spacingAndGlyphs">C</text>
<text x="491.9" y="45.6" font-size="9.4" fill="#2a9d94" textLength="59.3" lengthAdjust="spacingAndGlyphs">1620.86000000</text>
<text x="555.0" y="45.6" font-size="9.4" fill="#2a9d94" textLength="57.2" lengthAdjust="spacingAndGlyphs">[0.01171993%]</text>
<text x="616.0" y="45.6" font-size="8.9" fill="#fff" font-weight="bold" textLength="16.5" lengthAdjust="spacingAndGlyphs">BBS</text>
<text x="637.2" y="45.6" font-size="9.4" fill="#d48a24" textLength="60.0" lengthAdjust="spacingAndGlyphs">1618.69000000</text>
<text x="701.3" y="45.6" font-size="9.4" fill="#2a8fd4" textLength="59.0" lengthAdjust="spacingAndGlyphs">1624.59700000</text>
<text x="764.4" y="45.6" font-size="9.4" fill="#e0644c" textLength="59.2" lengthAdjust="spacingAndGlyphs">1612.78400000</text>
<text x="223.5" y="516.9" font-size="8" fill="#fff" textLength="54.5" lengthAdjust="spacingAndGlyphs">Sep 23 02:10:00</text>
<text x="308.4" y="516.9" font-size="8.7" fill="#e4e4e4">3</text>
<text x="380.8" y="516.9" font-size="8.7" fill="#e4e4e4">4</text>
<text x="453.1" y="516.9" font-size="8.7" fill="#e4e4e4">5</text>
<text x="525.5" y="516.9" font-size="8.7" fill="#e4e4e4">6</text>
<text x="597.9" y="516.9" font-size="8.7" fill="#e4e4e4">7</text>
<text x="670.3" y="516.9" font-size="8.7" fill="#e4e4e4">8</text>
<text x="742.6" y="516.9" font-size="8.7" fill="#e4e4e4">9</text>
<text x="815.0" y="516.9" font-size="8.7" fill="#e4e4e4">10</text>
<text x="887.4" y="516.9" font-size="8.7" fill="#e4e4e4">11</text>
<text x="228.5" y="561.9" font-size="10.5" fill="#f4f4f4" textLength="147.3" lengthAdjust="spacingAndGlyphs">crypto binance:ETHBUSD:5 Minute</text>
<text x="393.5" y="561.9" font-size="10.5" fill="#f4f4f4" textLength="121.5" lengthAdjust="spacingAndGlyphs">ctrader 1:EURUSD:15 Minute</text>
<text x="533.5" y="561.9" font-size="10.5" fill="#f4f4f4" textLength="151.5" lengthAdjust="spacingAndGlyphs">crypto binance:ETHBUSD:5 Minutes</text>
<text x="272.9" y="583.9" font-size="10" fill="#fff" textLength="40.0" lengthAdjust="spacingAndGlyphs">Positions</text>
<text x="371.0" y="583.9" font-size="10" fill="#a3b3bc" textLength="64.7" lengthAdjust="spacingAndGlyphs">Pending orders</text>
<text x="478.3" y="583.9" font-size="10" fill="#a3b3bc" textLength="71.0" lengthAdjust="spacingAndGlyphs">Closed Positions</text>
<text x="590.7" y="583.9" font-size="10" fill="#a3b3bc" textLength="66.8" lengthAdjust="spacingAndGlyphs">Rejected orders</text>
<text x="726.5" y="583.9" font-size="10" fill="#a3b3bc" textLength="16.5" lengthAdjust="spacingAndGlyphs">Log</text>
<text x="227.0" y="606.9" font-size="8.6" fill="#f0f0f0" textLength="25.3" lengthAdjust="spacingAndGlyphs">Session</text>
<text x="331.2" y="606.9" font-size="8.6" fill="#f0f0f0" textLength="20.1" lengthAdjust="spacingAndGlyphs">Ticket</text>
<text x="435.0" y="606.9" font-size="8.6" fill="#f0f0f0" textLength="15.0" lengthAdjust="spacingAndGlyphs">Time</text>
<text x="511.0" y="606.9" font-size="8.6" fill="#f0f0f0" textLength="16.2" lengthAdjust="spacingAndGlyphs">Type</text>
<text x="538.7" y="606.9" font-size="8.6" fill="#f0f0f0" textLength="13.3" lengthAdjust="spacingAndGlyphs">Lots</text>
<text x="594.0" y="606.9" font-size="8.6" fill="#f0f0f0" textLength="23.6" lengthAdjust="spacingAndGlyphs">Symbol</text>
<text x="662.6" y="606.9" font-size="8.6" fill="#f0f0f0" textLength="29.6" lengthAdjust="spacingAndGlyphs">Comment</text>
<text x="732.4" y="606.9" font-size="8.6" fill="#f0f0f0" textLength="15.8" lengthAdjust="spacingAndGlyphs">Price</text>
<text x="787.7" y="606.9" font-size="8.6" fill="#f0f0f0" textLength="11.8" lengthAdjust="spacingAndGlyphs">S/L</text>
<text x="822.0" y="606.9" font-size="8.6" fill="#f0f0f0" textLength="13.0" lengthAdjust="spacingAndGlyphs">T/P</text>
<text x="918.6" y="606.9" font-size="8.6" fill="#f0f0f0" textLength="15.8" lengthAdjust="spacingAndGlyphs">Profit</text>
<text x="855.9" y="602.0" font-size="8.6" fill="#f0f0f0" textLength="17.7" lengthAdjust="spacingAndGlyphs">Open</text>
<text x="855.9" y="610.6" font-size="8.6" fill="#f0f0f0" textLength="9.5" lengthAdjust="spacingAndGlyphs">ms</text>
<text x="890.2" y="602.0" font-size="8.6" fill="#f0f0f0" textLength="17.7" lengthAdjust="spacingAndGlyphs">Open</text>
<text x="890.2" y="610.6" font-size="8.6" fill="#f0f0f0" textLength="11.5" lengthAdjust="spacingAndGlyphs">slip</text></svg>
</body></html>
